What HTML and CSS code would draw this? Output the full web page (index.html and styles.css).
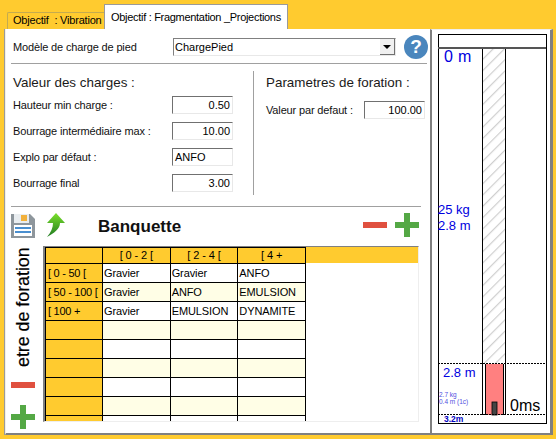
FILE: index.html
```html
<!DOCTYPE html>
<html lang="fr">
<head>
<meta charset="utf-8">
<title>Objectif</title>
<link rel="stylesheet" href="styles.css">
</head>
<body>
<div class="app">
  <div class="main">
    <div class="tabs">
      <div class="tab tab-off"><span>Objectif&nbsp; : Vibration</span></div>
      <div class="tab tab-on"><span>Objectif : Fragmentation _Projections</span></div>
    </div>
    <div class="panel">
      <div class="model-row">
        <span class="label model-label">Modèle de charge de pied</span>
        <div class="select"><span>ChargePied</span><span class="select-btn"><i></i></span></div>
        <div class="help">?</div>
      </div>
      <div class="rule"></div>
      <div class="params">
        <div class="charges">
          <h2 class="head">Valeur des charges :</h2>
          <div class="field"><span class="label">Hauteur min charge :</span><span class="input num">0.50</span></div>
          <div class="field"><span class="label">Bourrage intermédiaire max :</span><span class="input num">10.00</span></div>
          <div class="field"><span class="label">Explo par défaut :</span><span class="input">ANFO</span></div>
          <div class="field"><span class="label">Bourrage final</span><span class="input num">3.00</span></div>
        </div>
        <div class="foration">
          <h2 class="head">Parametres de foration :</h2>
          <div class="field"><span class="label">Valeur par defaut :</span><span class="input num">100.00</span></div>
        </div>
      </div>
      <div class="rule rule-low"></div>
      <div class="lower">
        <div class="side">
          <svg class="ico-save" viewBox="0 0 24 24" width="24" height="24">
            <path d="M0 0H19L24 5V24H0Z" fill="#8e969c"/>
            <rect x="3" y="0" width="15" height="9" fill="#e9edf0"/>
            <rect x="10" y="1" width="6" height="6" fill="#f2b13c"/>
            <rect x="3" y="11" width="18" height="11" fill="#fff"/>
            <rect x="4" y="13" width="16" height="2" fill="#4a8fd0"/>
            <rect x="4" y="17" width="16" height="2" fill="#4a8fd0"/>
          </svg>
          <div class="vtext">etre de foration</div>
          <svg class="ico-minus" viewBox="0 0 24 6" width="24" height="6"><rect width="24" height="6" fill="#e0503f"/></svg>
          <svg class="ico-plus" viewBox="0 0 24 24" width="24" height="24"><path d="M9 0H15V9H24V15H15V24H9V15H0V9H9Z" fill="#54a845"/></svg>
        </div>
        <div class="content">
          <div class="bar">
            <svg class="ico-up" viewBox="0 0 20 24" width="20" height="24">
              <defs><linearGradient id="g" x1="0" y1="0" x2="0" y2="1"><stop offset="0" stop-color="#7be02a"/><stop offset="1" stop-color="#1f7a22"/></linearGradient></defs>
              <path d="M10 0L19 10H14C14 16 8 20 1 24C5 19 7 15 7 10H1Z" fill="url(#g)"/>
            </svg>
            <span class="title">Banquette</span>
            <svg class="ico-minus2" viewBox="0 0 24 6" width="24" height="6"><rect width="24" height="6" fill="#e0503f"/></svg>
            <svg class="ico-plus2" viewBox="0 0 24 24" width="24" height="24"><path d="M9 0H15V9H24V15H15V24H9V15H0V9H9Z" fill="#54a845"/></svg>
          </div>
          <div class="grid-box">
            <table class="grid">
              <thead>
                <tr><th class="rh"></th><th>[ 0 - 2 [</th><th>[ 2 - 4 [</th><th>[ 4 +</th></tr>
              </thead>
              <tbody>
                <tr><th class="rh">[ 0 - 50 [</th><td>Gravier</td><td>Gravier</td><td>ANFO</td></tr>
                <tr><th class="rh">[ 50 - 100 [</th><td>Gravier</td><td>ANFO</td><td>EMULSION</td></tr>
                <tr><th class="rh">[ 100 +</th><td>Gravier</td><td>EMULSION</td><td>DYNAMITE</td></tr>
                <tr><th class="rh"></th><td></td><td></td><td></td></tr>
                <tr><th class="rh"></th><td></td><td></td><td></td></tr>
                <tr><th class="rh"></th><td></td><td></td><td></td></tr>
                <tr><th class="rh"></th><td></td><td></td><td></td></tr>
                <tr><th class="rh"></th><td></td><td></td><td></td></tr>
                <tr><th class="rh"></th><td></td><td></td><td></td></tr>
              </tbody>
            </table>
          </div>
        </div>
      </div>
    </div>
  </div>
  <div class="diagram">
    <svg viewBox="0 0 118 405" width="118" height="405">
      <defs>
        <pattern id="hatch" width="8" height="8" patternUnits="userSpaceOnUse" patternTransform="rotate(45)">
          <rect width="8" height="8" fill="#fff"/>
          <rect width="1.2" height="8" fill="#cfcfcf"/>
        </pattern>
      </defs>
      <rect x="6.5" y="4.5" width="108" height="389" fill="#fff" stroke="#000"/>
      <rect x="6" y="17" width="108" height="2" fill="#555"/>
      <rect x="50" y="19" width="23" height="315" fill="url(#hatch)"/>
      <rect x="54" y="334" width="17" height="51" fill="#ff8080"/>
      <rect x="60" y="372" width="5" height="13" fill="#444" stroke="#000" stroke-width="0.8"/>
      <path d="M50.5 19V385M73.5 19V385M53.5 334V385M71.5 334V385" stroke="#000" fill="none"/>
      <path d="M6 333.5H114M6 384.5H114" stroke="#000" stroke-dasharray="2 1" fill="none"/>
      <text x="12" y="32" class="t-lg">0 m</text>
      <text x="6" y="184" class="t-md">25 kg</text>
      <text x="6" y="200" class="t-md">2.8 m</text>
      <text x="11" y="347" class="t-md">2.8 m</text>
      <text x="7" y="367" class="t-xs">2.7 kg</text>
      <text x="7" y="374" class="t-xs">0.4 m (1c)</text>
      <text x="12" y="392" class="t-sm">3.2m</text>
      <text x="78" y="381" class="t-ms">0ms</text>
    </svg>
  </div>
</div>
</body>
</html>
```

FILE: styles.css
```css
* { box-sizing: border-box; }
html, body { margin: 0; padding: 0; }
body {
  width: 556px;
  height: 439px;
  overflow: hidden;
  background: #ffcb2f;
  font-family: "Liberation Sans", Arial, sans-serif;
  font-size: 11px;
  color: #000;
}
.app {
  display: flex;
  height: 435px;
  padding-left: 5px;
  padding-right: 3px;
}
.main { width: 425px; display: flex; flex-direction: column; }
.tabs {
  display: flex;
  align-items: flex-end;
  height: 29px;
  padding-left: 2px;
  flex: none;
}
.tab { white-space: nowrap; font-size: 11px; letter-spacing: -0.3px; }
.tab-off {
  width: 97px;
  height: 17px;
  padding: 0 0 0 5px;
  line-height: 15px;
  background: #ffcb2f;
  border: 1px solid #c4ab4f;
  border-bottom: 0;
  border-right: 0;
  border-radius: 2px 0 0 0;
  letter-spacing: -0.2px;
}
.tab-on {
  width: 184px;
  height: 25px;
  padding: 6px 0 0 6px;
  background: #fff;
  border: 1px solid #9a9a9a;
  border-bottom: 0;
  position: relative;
  z-index: 1;
}
.panel {
  flex: 1;
  background: #fff;
  border-left: 1px solid #f3f0e4;
  border-bottom: 2px solid #808080;
  box-shadow: -1px 0 0 #9a9a9a;
  padding: 6px 0 0 7px;
  display: flex;
  flex-direction: column;
  min-width: 0;
}
.label { font-size: 11px; letter-spacing: -0.15px; white-space: nowrap; color: #111; }
.model-row { display: flex; align-items: center; height: 24px; }
.model-label { width: 160px; }
.select {
  width: 223px;
  height: 18px;
  border-top: 1px solid #808080;
  border-left: 1px solid #808080;
  border-right: 1px solid #e8e8e8;
  border-bottom: 1px solid #e8e8e8;
  font-size: 11px;
  line-height: 16px;
  padding-left: 1px;
  display: flex;
  justify-content: space-between;
}
.select-btn {
  width: 15px;
  height: 16px;
  background: #f0f0f0;
  border-right: 1px solid #707070;
  border-bottom: 1px solid #707070;
  display: flex;
  align-items: center;
  justify-content: center;
}
.select-btn i {
  width: 0;
  height: 0;
  border-left: 4px solid transparent;
  border-right: 4px solid transparent;
  border-top: 4px solid #000;
}
.help {
  width: 24px;
  height: 24px;
  margin-left: 8px;
  border-radius: 50%;
  background: #4a86bd;
  color: #fff;
  font-weight: 700;
  font-size: 19px;
  line-height: 24px;
  text-align: center;
  flex: none;
}
.rule { height: 1px; background: #a0a0a0; margin: 4px 0 0 -2px; width: 416px; flex: none; }
.params { display: flex; height: 142px; flex: none; }
.head { margin: 0; font-weight: 400; font-size: 13.4px; color: #1a1a1a; line-height: 17px; white-space: nowrap; }
.charges { width: 240px; padding-top: 10px; flex: none; }
.charges .head { margin-bottom: 1px; }
.charges .field { width: 220px; }
.field { display: flex; justify-content: space-between; align-items: center; height: 26px; }
.foration {
  margin-top: 7px;
  height: 124px;
  border-left: 1px solid #a0a0a0;
  padding: 3px 0 0 12px;
  width: 172px;
  flex: none;
}
.foration .head { margin-bottom: 6px; }
.foration .field { width: 159px; }
.input {
  width: 61px;
  height: 18px;
  font-size: 11px;
  line-height: 16px;
  padding: 0 2px;
  background: #fff;
  border-top: 1px solid #707070;
  border-left: 1px solid #707070;
  border-right: 1px solid #e8e8e8;
  border-bottom: 1px solid #e8e8e8;
}
.num { text-align: right; }
.rule-low { margin-top: 0; width: 410px; }
.lower { display: flex; flex: 1; min-height: 0; margin-left: -2px; }
.side {
  width: 32px;
  flex: none;
  display: flex;
  flex-direction: column;
  align-items: flex-start;
  padding: 7px 0 0 0;
}
.ico-save { flex: none; }
.vtext {
  writing-mode: vertical-rl;
  transform: rotate(180deg);
  font-size: 17.8px;
  -webkit-text-stroke: 0.2px #000;
  height: 120px;
  margin-top: 9px;
  margin-left: 3px;
  white-space: nowrap;
  overflow: hidden;
  text-align: left;
  line-height: 18px;
  flex: none;
}
.ico-minus { margin-top: 15px; flex: none; }
.ico-plus { margin-top: 17px; flex: none; }
.content { flex: 1; display: flex; flex-direction: column; min-width: 0; }
.bar {
  display: flex;
  align-items: center;
  height: 39px;
  width: 376px;
  padding-bottom: 3px;
  flex: none;
}
.ico-up { margin-left: 3px; }
.title { font-weight: 700; font-size: 17px; margin: 4px 0 0 32px; color: #111; }
.ico-minus2 { margin-left: auto; margin-right: 8px; }
.grid-box {
  width: 376px;
  height: 176px;
  overflow: hidden;
  background: #fff;
  border-top: 1px solid #808080;
  border-left: 2px solid #808080;
  border-right: 1px solid #eee;
  border-bottom: 1px solid #eee;
  position: relative;
}
.grid-box::before {
  content: "";
  position: absolute;
  left: 0; right: 0; top: 0;
  height: 16px;
  background: #ffcb2f;
}
.grid {
  position: relative;
  border-collapse: collapse;
  table-layout: fixed;
  width: 261px;
  font-size: 11px;
  letter-spacing: -0.1px;
}
.grid th, .grid td {
  border: 1px solid #000;
  height: 19px;
  padding: 0 1px;
  font-weight: 400;
  overflow: hidden;
  white-space: nowrap;
  text-align: left;
  line-height: 15px;
}
.grid th.rh { width: 57px; background: #ffcb2f; padding-left: 2px; letter-spacing: -0.25px; }
.grid thead th { background: #ffcb2f; text-align: center; height: 16px; }
.grid tbody tr:nth-child(even) td { background: #fffee6; }
.grid tbody tr:nth-child(odd) td { background: #fff; }
.diagram {
  width: 123px;
  margin-top: 29px;
  height: 406px;
  flex: none;
  background: #fff;
  border-left: 2px solid #808080;
  border-right: 3px solid #808080;
  border-bottom: 2px solid #808080;
  border-top: 1px solid #eee;
}
.diagram svg { display: block; }
.t-lg { font-size: 16px; fill: #0000e0; font-family: "Liberation Sans", sans-serif; letter-spacing: 0.3px; }
.t-md { font-size: 13px; fill: #0000e0; font-family: "Liberation Sans", sans-serif; }
.t-sm { font-size: 8.5px; fill: #0000c0; font-weight: 700; font-family: "Liberation Sans", sans-serif; }
.t-xs { font-size: 6.5px; fill: #5050e0; font-family: "Liberation Sans", sans-serif; }
.t-ms { font-size: 16px; fill: #000; font-family: "Liberation Sans", sans-serif; }
```
